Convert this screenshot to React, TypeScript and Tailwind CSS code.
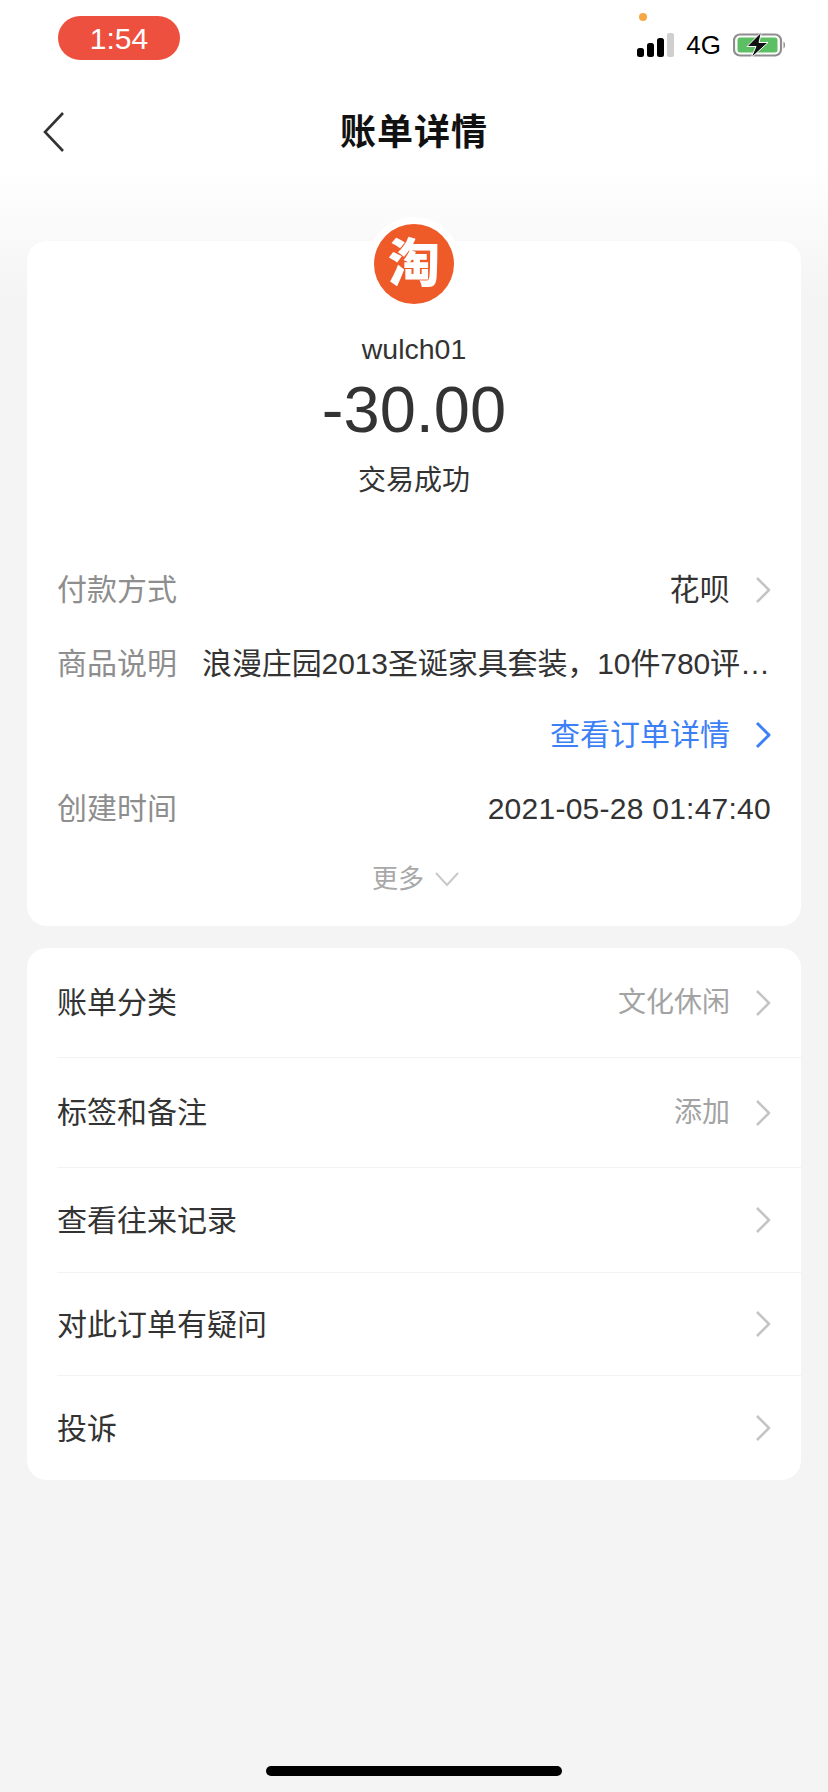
const font = { fontFamily: '"Liberation Sans", "Noto Sans CJK SC", sans-serif' };

function Arrow({ color = '#c4c4c4', weight = 2.5 }: { color?: string; weight?: number }) {
  return (
    <svg width="16" height="28" viewBox="0 0 16 28" fill="none" className="shrink-0">
      <path d="M2 2 L14 14 L2 26" stroke={color} strokeWidth={weight} strokeLinejoin="round" />
    </svg>
  );
}

function InfoRow({ label, value, arrow, className }: { label: string; value: string; arrow?: boolean; className: string }) {
  return (
    <div className={`flex items-center justify-between ${className}`}>
      <span className="text-[30px] leading-[40px] text-[#8e8e8e] shrink-0">{label}</span>
      <div className="flex items-center gap-[25px]">
        <span className="text-[30px] leading-[40px] text-[#333333] tracking-[0.25px]">{value}</span>
        {arrow && <Arrow />}
      </div>
    </div>
  );
}

function MenuRow({ label, value, height, divider = true }: { label: string; value?: string; height: string; divider?: boolean }) {
  return (
    <div className={`flex items-center justify-between ml-[30px] pr-[30px] ${height} ${divider ? 'border-b border-[#f3f3f3]' : ''}`}>
      <span className="text-[30px] text-[#333333]">{label}</span>
      <div className="flex items-center gap-[25px]">
        {value && <span className="text-[28px] text-[#a3a3a3]">{value}</span>}
        <Arrow />
      </div>
    </div>
  );
}

export default function App() {
  return (
    <div className="w-[828px] h-[1792px] bg-[#f4f4f5] flex flex-col relative overflow-hidden" style={font}>
      {/* top gradient */}
      <div className="absolute top-0 left-0 w-full h-[300px] bg-gradient-to-b from-white from-[55%] to-[#f4f4f5]" />

      <div className="relative flex flex-col h-full">
        {/* Status bar */}
        <div className="h-[80px] flex justify-between pl-[58px] pr-[42px]">
          <div className="mt-[16px] w-[122px] h-[44px] rounded-[22px] bg-[#ee5040] flex items-center justify-center text-white text-[30px]">
            1:54
          </div>
          <div className="flex flex-col items-start">
            <div className="mt-[13px] ml-[2px] w-[8px] h-[8px] rounded-full bg-[#f5a843]" />
            <div className="flex items-center mt-[11px] gap-[12px]">
              <svg width="37" height="24" viewBox="0 0 37 24">
                <rect x="0" y="15" width="7" height="9" rx="2.5" fill="#000" />
                <rect x="10" y="10" width="7" height="14" rx="2.5" fill="#000" />
                <rect x="20" y="5" width="7" height="19" rx="2.5" fill="#000" />
                <rect x="30" y="0" width="7" height="24" rx="2" fill="#cfcfcf" />
              </svg>
              <span className="text-[26px] leading-[24px] text-black">4G</span>
              <svg width="53" height="26" viewBox="0 0 53 26">
                <rect x="1" y="2.5" width="47" height="21" rx="6" fill="none" stroke="#8e8e8e" strokeWidth="2.2" />
                <rect x="4.5" y="5.5" width="40" height="15" rx="2.5" fill="#5cbf63" />
                <path d="M50.5 9.5 C52.5 10.5 52.5 15.5 50.5 16.5 Z" fill="#8e8e8e" />
                <path d="M28.5 0 L14 14.5 H23 L18 26 L35 10.5 H26 Z" fill="#111" stroke="#fff" strokeWidth="1" />
              </svg>
            </div>
          </div>
        </div>

        {/* Header */}
        <div className="relative h-[105px] flex items-center justify-center">
          <svg width="24" height="42" viewBox="0 0 24 42" fill="none" className="absolute left-[42px] top-[31px]">
            <path d="M21 2 L3 21 L21 40" stroke="#333" strokeWidth="2.6" />
          </svg>
          <span className="text-[36px] font-bold text-[#111111] tracking-[1px]">账单详情</span>
        </div>

        {/* Bill card */}
        <div className="relative mt-[56px] mx-[27px] h-[685px] rounded-[20px] bg-white">
          <div className="absolute left-1/2 top-[-24px] -translate-x-1/2 w-[94px] h-[94px] rounded-full bg-white flex items-center justify-center">
            <div className="w-[80px] h-[80px] rounded-full bg-[#ee5a28] flex items-center justify-center text-white text-[52px] font-black leading-none">
              淘
            </div>
          </div>

          <div className="pt-[91px] flex flex-col items-center">
            <span className="text-[28.5px] leading-[34px] text-[#333333]">wulch01</span>
            <span className="mt-[9px] text-[65px] leading-[70px] text-[#333333]">-30.00</span>
            <span className="mt-[18px] text-[28px] leading-[36px] text-[#333333]">交易成功</span>
          </div>

          <div className="px-[30px]">
            <InfoRow label="付款方式" value="花呗" arrow className="mt-[71px]" />
            <div className="mt-[34px] flex items-center gap-[25px]">
              <span className="text-[30px] leading-[40px] text-[#8e8e8e] shrink-0">商品说明</span>
              <span className="text-[30px] leading-[40px] text-[#333333] truncate tracking-[-0.1px]">浪漫庄园2013圣诞家具套装，10件780评价晒图</span>
            </div>
            <div className="mt-[31px] flex items-center justify-end gap-[25px] text-[#3d7ff5]">
              <span className="text-[30px] leading-[40px]">查看订单详情</span>
              <Arrow color="#3d7ff5" weight={3} />
            </div>
            <InfoRow label="创建时间" value="2021-05-28 01:47:40" className="mt-[34px]" />
            <div className="mt-[33px] pl-[4px] flex items-center justify-center gap-[10px] text-[#a8a8a8]">
              <span className="text-[26px] leading-[34px]">更多</span>
              <svg width="26" height="16" viewBox="0 0 26 16" fill="none">
                <path d="M2 2 L13 14 L24 2" stroke="#c9c9c9" strokeWidth="2" />
              </svg>
            </div>
          </div>
        </div>

        {/* Menu card */}
        <div className="mt-[22px] mx-[27px] rounded-[20px] bg-white overflow-hidden">
          <MenuRow label="账单分类" value="文化休闲" height="h-[110px]" />
          <MenuRow label="标签和备注" value="添加" height="h-[110px]" />
          <MenuRow label="查看往来记录" height="h-[105px]" />
          <MenuRow label="对此订单有疑问" height="h-[103px]" />
          <MenuRow label="投诉" height="h-[104px]" divider={false} />
        </div>

        {/* Home indicator */}
        <div className="absolute bottom-[16px] left-[266px] w-[296px] h-[10px] rounded-full bg-black" />
      </div>
    </div>
  );
}
